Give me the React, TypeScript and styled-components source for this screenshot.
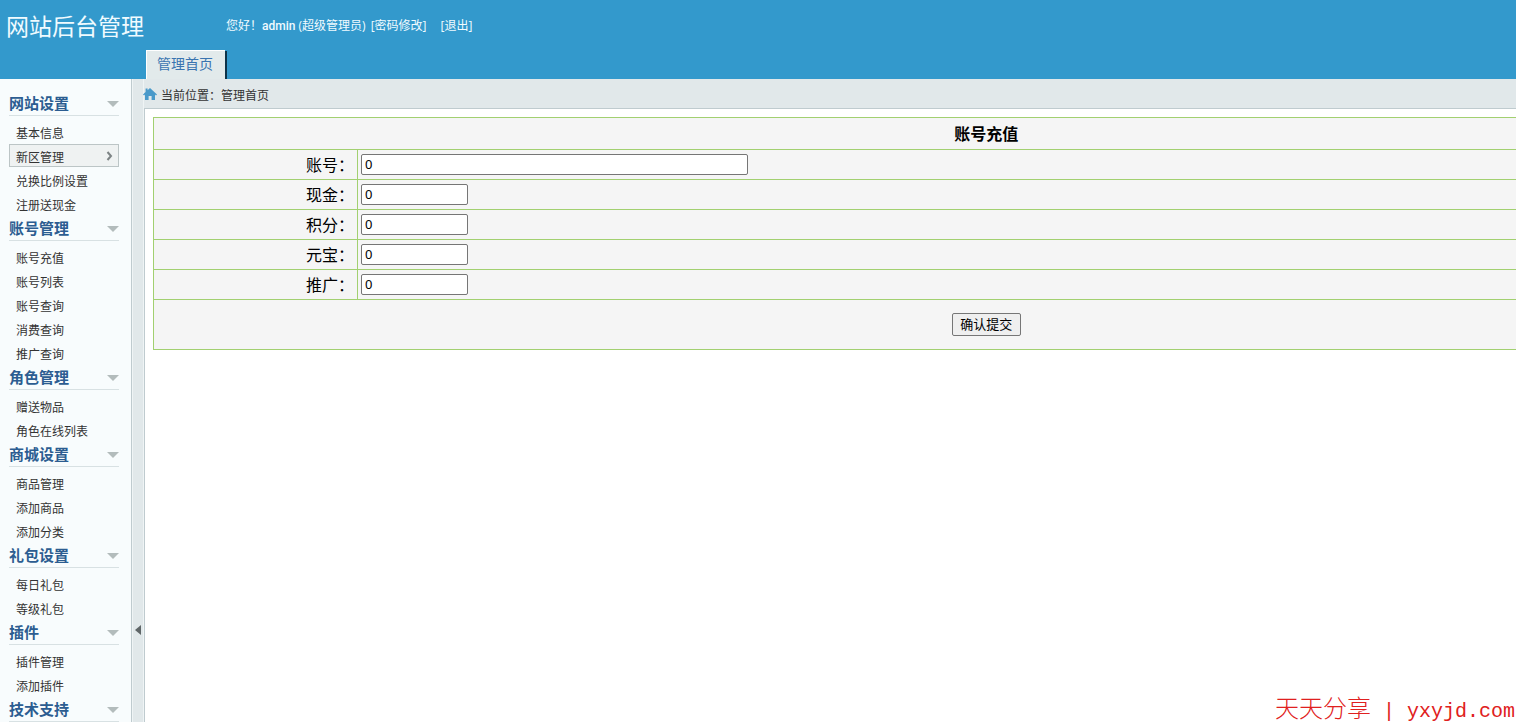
import React from "react";
import styled, { createGlobalStyle } from "styled-components";

const GlobalStyle = createGlobalStyle`
  *, *::before, *::after { box-sizing: border-box; }
  html, body { margin: 0; padding: 0; overflow: hidden; }
  body {
    background: #ffffff;
    color: #333333;
    font-family: "Open Sans", "Noto Sans CJK SC", sans-serif;
    font-size: 12px;
    line-height: 16px;
  }
  a { color: inherit; text-decoration: none; }
`;

const Page = styled.div`
  position: relative;
  display: flex;
  flex-direction: column;
  height: 100vh;
  overflow: hidden;
`;

const Header = styled.header`
  flex: none;
  display: grid;
  grid-template-columns: 146px 1fr;
  grid-template-rows: 50px 29px;
  background: #3399cc;
  color: #f0fbff;
`;

const SiteTitle = styled.h1`
  margin: 0;
  padding-left: 6px;
  align-self: center;
  white-space: nowrap;
  font: 400 23px/32px "Noto Sans CJK SC", sans-serif;
`;

const Greeting = styled.div`
  display: flex;
  align-items: center;
  padding: 2px 0 0 80px;
  white-space: pre;
`;

const UserName = styled.span`
  font-family: Roboto, sans-serif;
  font-weight: 500;
`;

const AccountLinks = styled.span`
  display: flex;
  gap: 14px;
  margin-left: 2px;
`;

const Tabs = styled.nav`
  grid-column: 2;
  display: flex;
`;

const Tab = styled.a`
  display: flex;
  align-items: center;
  justify-content: center;
  width: 79px;
  padding: 0 2px 2px 0;
  background: #e2eaeb;
  border-top: 1px solid #ffffff;
  border-left: 1px solid #ffffff;
  box-shadow: 2px 1px 0 #0d3349;
  color: #3a74b0;
  font-size: 14px;
  line-height: 20px;
`;

const Body = styled.div`
  flex: 1;
  min-height: 0;
  display: flex;
`;

const Sidebar = styled.aside`
  flex: none;
  width: 132px;
  padding: 12px 12px 0 9px;
  overflow: hidden;
  background: #f8fcfd;
  border-right: 1px solid #bfcbcf;
`;

const GroupTitle = styled.h2`
  display: flex;
  align-items: center;
  justify-content: space-between;
  height: 25px;
  margin: 0 0 4px;
  padding-bottom: 1px;
  border-bottom: 1px solid #d8e1e3;
  color: #2c5d91;
  font-size: 15px;
  line-height: 20px;
  font-weight: 700;
`;

const Caret = styled.svg`
  width: 12px;
  height: 6px;
  margin-top: 2px;
  fill: #b3bcbc;
`;

const MenuList = styled.ul`
  margin: 0;
  padding: 0;
  list-style: none;
`;

const MenuItem = styled.li`
  height: 24px;
`;

const MenuLink = styled.a<{ $active: boolean }>`
  display: flex;
  align-items: center;
  justify-content: space-between;
  height: 23px;
  padding: 4px 5px 0 6px;
  border: 1px solid ${(p) => (p.$active ? "#bcc5c6" : "transparent")};
  background: ${(p) => (p.$active ? "#eff2f2" : "transparent")};
`;

const Chevron = styled.svg`
  width: 7px;
  height: 10px;
  margin-bottom: 4px;
  fill: none;
  stroke: #7d8485;
  stroke-width: 2;
`;

const Splitter = styled.div`
  flex: none;
  display: flex;
  flex-direction: column;
  justify-content: flex-end;
  width: 12px;
  padding-bottom: 84px;
  background: #e1e8ea;
  border-left: 1px solid #eff4f5;
  border-right: 1px solid #eff4f5;
`;

const CollapseButton = styled.button`
  display: flex;
  align-items: center;
  justify-content: center;
  height: 16px;
  padding: 0;
  border: 0;
  background: transparent;
`;

const Main = styled.main`
  flex: 1;
  min-width: 0;
  display: flex;
  flex-direction: column;
  background: #e1e8ea;
`;

const Breadcrumb = styled.div`
  flex: none;
  display: flex;
  align-items: center;
  gap: 4px;
  height: 29px;
  padding-top: 4px;
`;

const HomeIcon = styled.svg`
  width: 14px;
  height: 14px;
  margin: 0 0 4px -1px;
  fill: #4a9aca;
`;

const Content = styled.div`
  flex: 1;
  min-height: 0;
  padding: 8px;
  overflow: hidden;
  background: #ffffff;
  border-top: 1px solid #bfcbcf;
  border-left: 1px solid #bfcbcf;
`;

const FormTable = styled.table`
  width: 123%;
  table-layout: fixed;
  border-collapse: collapse;
  background: #f5f5f5;
  color: #000000;
  font-family: "Noto Sans", "Noto Sans CJK SC", sans-serif;
  font-size: 16px;
  line-height: 22px;
`;

const LabelColumn = styled.col`
  width: 204px;
`;

const TitleCell = styled.th`
  height: 32px;
  padding: 0;
  border: 1px solid #a2d070;
  font-weight: 700;
`;

const LabelCell = styled.th`
  height: 30px;
  padding: 0 3px 0 0;
  border: 1px solid #a2d070;
  font-weight: 400;
  text-align: right;
`;

const FieldCell = styled.td`
  height: 30px;
  padding: 0 3px 1px;
  border: 1px solid #a2d070;
`;

const SubmitCell = styled.td`
  height: 50px;
  padding: 0 0 2px;
  border: 1px solid #a2d070;
  text-align: center;
`;

const TextInput = styled.input<{ $wide: boolean }>`
  display: block;
  width: ${(p) => (p.$wide ? 387 : 107)}px;
  height: 21px;
  padding: 0 3px;
  border: 1px solid #767676;
  border-radius: 2px;
  background: #ffffff;
  color: #000000;
  font: 13px/18px "Noto Sans", "Noto Sans CJK SC", sans-serif;
`;

const SubmitButton = styled.button`
  width: 69px;
  height: 23px;
  padding: 0;
  border: 1px solid #767676;
  border-radius: 2px;
  background: #efefef;
  color: #000000;
  font: 13px/18px "Noto Sans CJK SC", sans-serif;
  vertical-align: middle;
`;

const Watermark = styled.div`
  position: absolute;
  right: 1px;
  bottom: 3px;
  display: flex;
  align-items: baseline;
  height: 24px;
  white-space: pre;
  color: #e02020;
  pointer-events: none;
`;

const WatermarkName = styled.span`
  font: 300 24px/24px "Noto Sans CJK SC", sans-serif;
`;

const WatermarkSite = styled.span`
  font: 400 20px/24px "Liberation Mono", monospace;
`;

const menu = [
  { title: "网站设置", items: ["基本信息", "新区管理", "兑换比例设置", "注册送现金"] },
  { title: "账号管理", items: ["账号充值", "账号列表", "账号查询", "消费查询", "推广查询"] },
  { title: "角色管理", items: ["赠送物品", "角色在线列表"] },
  { title: "商城设置", items: ["商品管理", "添加商品", "添加分类"] },
  { title: "礼包设置", items: ["每日礼包", "等级礼包"] },
  { title: "插件", items: ["插件管理", "添加插件"] },
  { title: "技术支持", items: [] },
];

const fields = [
  { id: "account", label: "账号：", wide: true },
  { id: "cash", label: "现金：", wide: false },
  { id: "points", label: "积分：", wide: false },
  { id: "ingots", label: "元宝：", wide: false },
  { id: "referral", label: "推广：", wide: false },
];

const activeItem = "新区管理";

export default function App() {
  return (
    <>
      <GlobalStyle />
      <Page>
        <Header>
          <SiteTitle>网站后台管理</SiteTitle>
          <Greeting>
            <span>您好！</span>
            <UserName>admin </UserName>
            <span>(超级管理员) </span>
            <AccountLinks>
              <a href="#password">[密码修改]</a>
              <a href="#logout">[退出]</a>
            </AccountLinks>
          </Greeting>
          <Tabs>
            <Tab href="#home">管理首页</Tab>
          </Tabs>
        </Header>
        <Body>
          <Sidebar>
            {menu.map((group) => (
              <nav key={group.title} aria-label={group.title}>
                <GroupTitle>
                  {group.title}
                  <Caret viewBox="0 0 12 6" aria-hidden="true">
                    <path d="M0 0H12L6 6Z" />
                  </Caret>
                </GroupTitle>
                <MenuList>
                  {group.items.map((item) => (
                    <MenuItem key={item}>
                      <MenuLink href="#menu" $active={item === activeItem}>
                        {item}
                        {item === activeItem && (
                          <Chevron viewBox="0 0 7 10" aria-hidden="true">
                            <path d="M1.5 1L5 5L1.5 9" />
                          </Chevron>
                        )}
                      </MenuLink>
                    </MenuItem>
                  ))}
                </MenuList>
              </nav>
            ))}
          </Sidebar>
          <Splitter>
            <CollapseButton type="button" aria-label="收起菜单">
              <svg width="6" height="10" viewBox="0 0 6 10" fill="#5f6668" aria-hidden="true">
                <path d="M6 0V10L0 5Z" />
              </svg>
            </CollapseButton>
          </Splitter>
          <Main>
            <Breadcrumb>
              <HomeIcon viewBox="0 0 14 14" aria-hidden="true">
                <path d="M7 1L14 7.4L13 8.4L12 7.6V13H8.6V9H5.6V13H2V7.6L1 8.4L0 7.4L2.6 5V1.6H4.6V3.2Z" />
              </HomeIcon>
              <span>当前位置：管理首页</span>
            </Breadcrumb>
            <Content>
              <form onSubmit={(e) => e.preventDefault()}>
                <FormTable>
                  <colgroup>
                    <LabelColumn />
                    <col />
                  </colgroup>
                  <thead>
                    <tr>
                      <TitleCell colSpan={2}>账号充值</TitleCell>
                    </tr>
                  </thead>
                  <tbody>
                    {fields.map((field) => (
                      <tr key={field.id}>
                        <LabelCell scope="row">
                          <label htmlFor={field.id}>{field.label}</label>
                        </LabelCell>
                        <FieldCell>
                          <TextInput id={field.id} type="text" defaultValue="0" $wide={field.wide} />
                        </FieldCell>
                      </tr>
                    ))}
                    <tr>
                      <SubmitCell colSpan={2}>
                        <SubmitButton type="submit">确认提交</SubmitButton>
                      </SubmitCell>
                    </tr>
                  </tbody>
                </FormTable>
              </form>
            </Content>
          </Main>
        </Body>
        <Watermark>
          <WatermarkName>天天分享</WatermarkName>
          <WatermarkSite>{" | yxyjd.com"}</WatermarkSite>
        </Watermark>
      </Page>
    </>
  );
}
